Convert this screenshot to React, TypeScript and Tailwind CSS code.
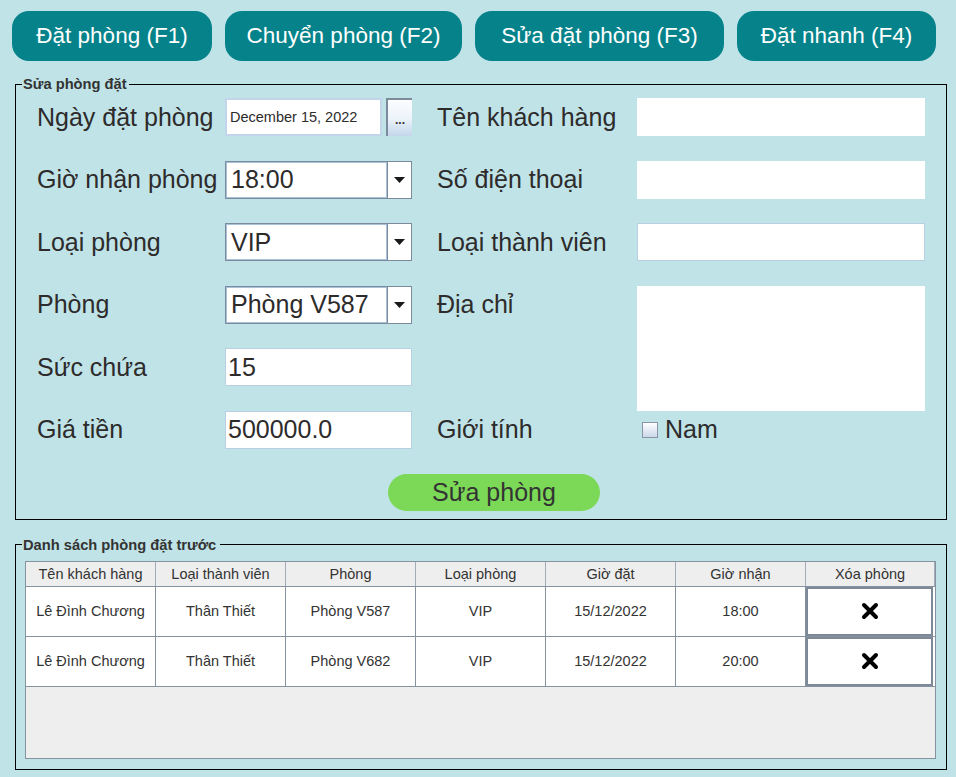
import React from 'react';

const tabs = [
  { label: 'Đặt phòng (F1)', w: 'w-[200px]' },
  { label: 'Chuyển phòng (F2)', w: 'w-[237px]' },
  { label: 'Sửa đặt phòng (F3)', w: 'w-[249px]' },
  { label: 'Đặt nhanh (F4)', w: 'w-[199px]' },
];

const bookings = [
  { name: 'Lê Đình Chương', member: 'Thân Thiết', room: 'Phòng V587', type: 'VIP', date: '15/12/2022', time: '18:00' },
  { name: 'Lê Đình Chương', member: 'Thân Thiết', room: 'Phòng V682', type: 'VIP', date: '15/12/2022', time: '20:00' },
];

const headers = ['Tên khách hàng', 'Loại thành viên', 'Phòng', 'Loại phòng', 'Giờ đặt', 'Giờ nhận', 'Xóa phòng'];

function Label({ children, right }: { children: React.ReactNode; right?: boolean }) {
  return (
    <div className={`flex items-center whitespace-nowrap text-[25px] leading-none ${right ? 'pl-[25px]' : ''}`}>
      {children}
    </div>
  );
}

function Combo({ value }: { value: string }) {
  return (
    <div className="flex h-[38px] border border-[#7b8b9c] bg-white">
      <div className="flex flex-1 items-center border border-[#a9c1da] px-[4px] text-[25px] leading-none">{value}</div>
      <div className="flex w-[24px] items-center justify-center border-l border-[#7b8b9c]">
        <svg width="11" height="6" viewBox="0 0 11 6">
          <path d="M0 0 H11 L5.5 6 Z" fill="#1a1a1a" />
        </svg>
      </div>
    </div>
  );
}

function TextBox({ value, bordered = true }: { value?: string; bordered?: boolean }) {
  return (
    <div
      className={`flex h-[38px] items-center bg-white px-[2px] text-[25px] leading-none ${
        bordered ? 'border border-[#b9cfe2]' : ''
      }`}
    >
      {value}
    </div>
  );
}

function DeleteIcon() {
  return (
    <svg width="18" height="18" viewBox="0 0 18 18">
      <path d="M3 3 L15 15 M15 3 L3 15" stroke="#000" strokeWidth="4" strokeLinecap="round" />
    </svg>
  );
}

export default function App() {
  return (
    <div className="h-[777px] w-[956px] overflow-hidden bg-[#c0e3e7] pt-[11px] font-['Liberation_Sans',Arial,sans-serif] text-[#2d2b2b]">
      {/* top tabs */}
      <div className="flex gap-[13px] pl-[12px]">
        {tabs.map((t) => (
          <button
            key={t.label}
            className={`${t.w} h-[50px] rounded-[17px] bg-[#06838a] text-[22.5px] leading-none text-white`}
          >
            {t.label}
          </button>
        ))}
      </div>

      {/* edit form */}
      <fieldset className="ml-[15px] mt-[15px] w-[932px] border border-black">
        <legend className="ml-[6px] pl-[1px] pr-[2px] text-[14.7px] font-bold leading-[16px] text-[#333]">Sửa phòng đặt</legend>
        <div className="pb-[8px] pl-[21px] pt-[6px]">
          <div className="grid grid-cols-[188px_187px_225px_288px] grid-rows-[repeat(6,38px)] gap-y-[24.6px]">
            <Label>Ngày đặt phòng</Label>
            <div className="flex h-[38px] gap-[4px]">
              <div className="flex flex-1 items-center border-2 border-[#c3d5ea] bg-white pl-[3px] text-[14.5px] leading-none">
                December 15, 2022
              </div>
              <div className="flex w-[26px] items-end justify-center border-l-2 border-t-2 border-[#7b8b9c] bg-gradient-to-b from-[#fbfdff] via-[#eef4fb] to-[#c3d6ea] pb-[10px] text-[12px] font-bold leading-none text-[#333]">
                ...
              </div>
            </div>
            <Label right>Tên khách hàng</Label>
            <TextBox bordered={false} />

            <Label>Giờ nhận phòng</Label>
            <Combo value="18:00" />
            <Label right>Số điện thoại</Label>
            <TextBox bordered={false} />

            <Label>Loại phòng</Label>
            <Combo value="VIP" />
            <Label right>Loại thành viên</Label>
            <TextBox />

            <Label>Phòng</Label>
            <Combo value="Phòng V587" />
            <Label right>Địa chỉ</Label>
            <div className="row-span-2 h-[125px] self-start bg-white" />

            <Label>Sức chứa</Label>
            <TextBox value="15" />
            <div />

            <Label>Giá tiền</Label>
            <TextBox value="500000.0" />
            <Label right>Giới tính</Label>
            <div className="flex items-center gap-[7px] pl-[5px]">
              <span className="h-[16px] w-[16px] border border-[#8a94a6] bg-gradient-to-b from-white to-[#cbd8ea]" />
              <span className="text-[25px] leading-none">Nam</span>
            </div>
          </div>

          <button className="ml-[351px] mt-[25px] h-[37px] w-[212px] rounded-full bg-[#7cd957] text-[25px] leading-none text-[#333]">
            Sửa phòng
          </button>
        </div>
      </fieldset>

      {/* booking list */}
      <fieldset className="ml-[15px] mt-[17px] w-[932px] border border-black">
        <legend className="ml-[6px] pl-[1px] pr-[4px] text-[14.7px] font-bold leading-[16px] text-[#333]">
          Danh sách phòng đặt trước
        </legend>
        <div className="pb-[10px] pl-[9px] pt-[8px]">
          <div className="flex h-[198px] w-[911px] flex-col border border-[#8592a0] bg-[#eeeeee] text-[14.5px] leading-none text-[#333]">
            <div className="grid h-[25px] grid-cols-[130px_130px_130px_130px_130px_130px_1fr] border-b border-[#8592a0] bg-[#eeeeee]">
              {headers.map((h) => (
                <div key={h} className="flex items-center justify-center border-r border-[#a3adb8]">
                  {h}
                </div>
              ))}
            </div>
            {bookings.map((b, i) => (
              <div
                key={i}
                className="grid h-[50px] grid-cols-[130px_130px_130px_130px_130px_130px_1fr] border-b border-[#8592a0] bg-white"
              >
                {[b.name, b.member, b.room, b.type, b.date, b.time].map((v, j) => (
                  <div key={j} className="flex items-center justify-center border-r border-[#8592a0]">
                    {v}
                  </div>
                ))}
                <div className="mr-[2px] flex items-center justify-center border-2 border-[#7d8996] bg-white">
                  <DeleteIcon />
                </div>
              </div>
            ))}
            <div className="flex-1" />
          </div>
        </div>
      </fieldset>
    </div>
  );
}
